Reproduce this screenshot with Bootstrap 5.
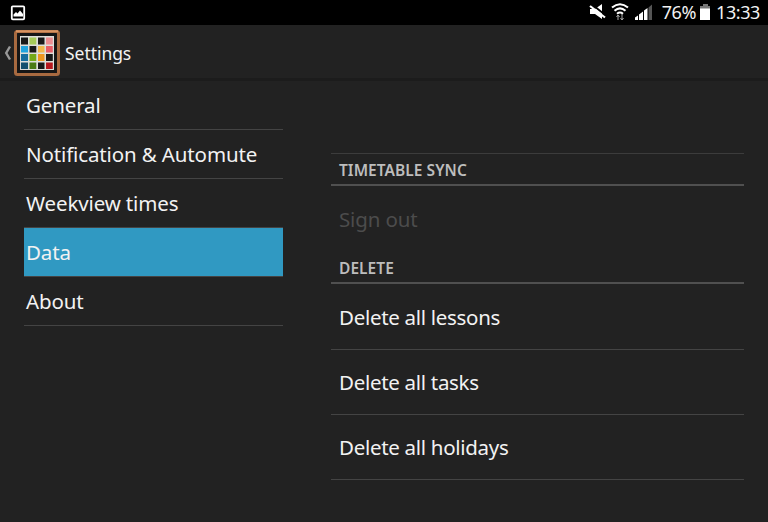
<!DOCTYPE html>
<html lang="en">
<head>
<meta charset="utf-8">
<meta name="viewport" content="width=device-width, initial-scale=1">
<title>Settings</title>
<link href="https://cdn.jsdelivr.net/npm/bootstrap@5.3.0/dist/css/bootstrap.min.css" rel="stylesheet">
<style>
body{background:#222;color:#f2f2f2;font-family:"Noto Sans",sans-serif;width:768px;height:522px;overflow:hidden}
.status{height:25px;background:#000;font-size:18px;line-height:27px;letter-spacing:-.4px}
.status svg,.actionbar svg{display:block;flex:none}
.actionbar{height:56px;border-bottom:3px solid #1c1c1c}
.app-title{font-size:17.5px;line-height:53px;letter-spacing:-.05px;margin-left:5px;padding-top:4px}
.sections{width:259px;margin-left:24px}
.sections .list-group-item{height:49px;line-height:48px;padding:0 0 0 2px;background:none;color:#f2f2f2;border:0;border-bottom:1px solid #444;border-radius:0;font-size:20.5px;letter-spacing:-.13px;margin:0}
.sections .list-group-item.active{background:#3099c2;background-clip:padding-box;margin:0}
.sections .list-group-item:last-child{border-bottom-width:1px}
.prefs{width:413px;margin-left:48px;padding-top:72px}
.pref-head{height:33px;border-top:1px solid #3c3c3c;border-bottom:2px solid #505050;font-size:15.5px;font-weight:600;line-height:33px;color:#bdbdbd;padding-left:8px;margin:0;letter-spacing:.05px}
.pref-head.plain{border-top-color:transparent}
.pref{height:65px;line-height:65px;border-bottom:1px solid #444;padding-left:8px;font-size:20.5px;letter-spacing:-.3px}
.pref.off{color:#4c4c4c;border:0;line-height:67px;letter-spacing:-.15px}
.pref-head.plain + .pref{height:66px;line-height:67px}
</style>
<script src="https://cdn.jsdelivr.net/npm/bootstrap@5.3.0/dist/js/bootstrap.bundle.min.js"></script>
</head>
<body>
<header>
<div class="status d-flex align-items-center">
<svg width="34" height="25"><rect x="11.800" y="6.300" width="12.400" height="13" rx="1" fill="none" stroke="#fff" stroke-width="1.800"/><path d="M13.500 16.500v-2l2.500-2.500 1.500 1.500 2.500-3 3 3.500v2.500z" fill="#fff"/></svg>
<div class="d-flex ms-auto align-items-center">
<svg width="73" height="25" viewBox="589 0 73 25"><path d="M590 9h5l7-5v15l-7-5h-5z" fill="#fff"/><path d="M591.500 4l15 12" stroke="#000" stroke-width="1.800"/><path d="M590 6l15 11.500" stroke="#fff" stroke-width="2.200"/>
<g fill="none" stroke="#fff" stroke-width="2.100"><path d="M612 7.500q8-6.500 16 0M614.500 10.700q5.500-4.500 11 0M617 13.700q3-2.400 6 0"/></g><path d="M618 20v-5m-1.500 2 1.500-2 1.500 2M622 14v6m-1.500-2 1.500 2 1.500-2" stroke="#aaa" fill="none"/>
<path d="M635 20v-2.500l3-2V20zM639 20v-5.500l4-3V20zM644 20v-9.500l3.500-2.500V20z" fill="#fff"/><path d="M648.500 20V7.500l3.500-3V20z" fill="#555"/></svg>
<span class="pct">76%</span>
<svg width="20" height="25"><path d="M7 4h5v2h2v3H4V6h3z" fill="#777"/><path d="M4 8.500h10V20H4z" fill="#fff"/></svg>
<span class="clock pe-2">13:33</span>
</div>
</div>
<nav class="actionbar d-flex align-items-center">
<svg width="60" height="53" viewBox="0 25 60 53"><path d="M10 46.500L6.200 53l3.800 6.500" fill="none" stroke="#999" stroke-width="2.400"/>
<rect x="15.500" y="31.500" width="43" height="43" rx="2" fill="#161616" stroke="#a86a40" stroke-width="3"/><path d="M16 31.200h42" stroke="#d99462" stroke-width="2"/>
<rect x="20" y="36" width="34" height="34" fill="#dededa"/>
<g fill="#191919"><path d="M21 37.500h7v7h-7zM38 37.500h6.500v7H38zM29.500 46h6.800v6.500h-6.800zM46 54h6.800v7H46zM38 62.500h6.500v6.500H38z"/></g>
<g><path fill="#a6cb59" d="M29.500 37.500h6.800v7h-6.800z"/><path fill="#ed8d91" d="M46 37.500h6.800v7H46z"/><path fill="#20a4df" d="M21 46h7v6.500h-7z"/><path fill="#f1b84c" d="M38 46h6.500v6.500H38z"/><path fill="#e85b65" d="M46 46h6.800v6.500H46z"/><path fill="#176e9f" d="M21 54h7v7h-7z"/><path fill="#75a919" d="M29.500 54h6.800v7h-6.800z"/><path fill="#ee9720" d="M38 54h6.500v7H38z"/><path fill="#15506f" d="M21 62.500h7v6.500h-7z"/><path fill="#4b7a14" d="M29.500 62.500h6.800v6.500h-6.800z"/><path fill="#b6171e" d="M46 62.500h6.800v6.500H46z"/></g></svg>
<span class="app-title">Settings</span>
</nav>
</header>
<main class="d-flex">
<div class="sections list-group list-group-flush flex-shrink-0">
<a class="list-group-item"><span>General</span></a>
<a class="list-group-item"><span>Notification &amp; Automute</span></a>
<a class="list-group-item"><span>Weekview times</span></a>
<a class="list-group-item active"><span>Data</span></a>
<a class="list-group-item"><span>About</span></a>
</div>
<section class="prefs flex-shrink-0">
<h2 class="pref-head"><span>TIMETABLE SYNC</span></h2>
<div class="pref off"><span>Sign out</span></div>
<h2 class="pref-head plain"><span>DELETE</span></h2>
<div class="pref"><span>Delete all lessons</span></div>
<div class="pref"><span>Delete all tasks</span></div>
<div class="pref"><span>Delete all holidays</span></div>
</section>
</main>
</body>
</html>
